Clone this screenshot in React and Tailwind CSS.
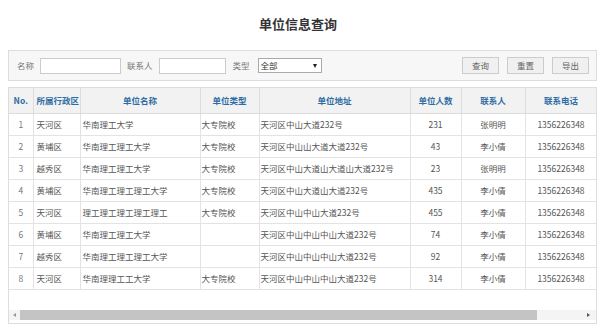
const COLS = [24, 47, 120, 59, 151, 51, 64, 72, 60]

const HEADERS = ['No.', '所属行政区', '单位名称', '单位类型', '单位地址', '单位人数', '联系人', '联系电话', '']

const ROWS = [
  ['1', '天河区', '华南理工大学', '大专院校', '天河区中山大道232号', '231', '张明明', '1356226348'],
  ['2', '黄埔区', '华南理工理工大学', '大专院校', '天河区中山山大道大道232号', '43', '李小倩', '1356226348'],
  ['3', '越秀区', '华南理工理工大学', '大专院校', '天河区中山大道山大道山大道232号', '23', '张明明', '1356226348'],
  ['4', '黄埔区', '华南理工理工理工大学', '大专院校', '天河区中山大道山大道232号', '435', '李小倩', '1356226348'],
  ['5', '天河区', '理工理工理工理工理工', '大专院校', '天河区中山中山大道232号', '455', '李小倩', '1356226348'],
  ['6', '黄埔区', '华南理工理工大学', '', '天河区中山中山中山大道232号', '74', '李小倩', '1356226348'],
  ['7', '越秀区', '华南理工理工理工大学', '', '天河区中山中山中山大道232号', '92', '李小倩', '1356226348'],
  ['8', '天河区', '华南理理工工大学', '大专院校', '天河区中山中山中山大道232号', '314', '李小倩', '1356226348'],
]

// column alignment for body cells
const ALIGN = ['text-center', 'text-left pl-[3px]', 'text-left pl-[2px]', 'text-left pl-[1px]', 'text-left pl-[1px]', 'text-center', 'text-center', 'text-center', 'text-center']

function Button({ children }) {
  return (
    <div className="w-[37px] h-[17px] flex items-center justify-center border border-[#ccc] bg-[#f0f0f0] text-[#666]">
      {children}
    </div>
  )
}

export default function App() {
  return (
    <div className="w-[604px] h-[332px] bg-white font-['Noto_Sans_CJK_SC',sans-serif] text-[8.5px] text-[#555] overflow-hidden">
      <div className="h-[50px] pt-[14px] pr-[8px]">
        <h1 className="text-center text-[13px] leading-[20px] font-bold text-[#333]">单位信息查询</h1>
      </div>

      <div className="ml-[8px] w-[589px] h-[31px] border border-[#ddd] bg-[#f7f7f7] flex items-center pl-[8px] pr-[7px]">
        <span className="text-[#777]">名称</span>
        <div className="ml-[6px] w-[81px] h-[16px] border border-[#ccc] bg-white" />
        <span className="ml-[6px] text-[#777]">联系人</span>
        <div className="ml-[6px] w-[67px] h-[16px] border border-[#ccc] bg-white" />
        <span className="ml-[7px] text-[#777]">类型</span>
        <div className="ml-[8px] w-[64px] h-[15px] border border-[#aaa] bg-white flex items-center justify-between pl-[2px] pr-[4px] text-[#333]">
          <span>全部</span>
          <span className="w-0 h-0 border-l-[2px] border-r-[2px] border-t-[4px] border-l-transparent border-r-transparent border-t-[#222]" />
        </div>
        <div className="ml-auto flex gap-[8px]">
          <Button>查询</Button>
          <Button>重置</Button>
          <Button>导出</Button>
        </div>
      </div>

      <div className="ml-[8px] mt-[6px] w-[589px] h-[237px] border border-[#ddd] flex flex-col">
        <div className="h-[222px] overflow-hidden">
          <table className="table-fixed border-collapse w-[648px]">
            <colgroup>
              {COLS.map((w, i) => (
                <col key={i} style={{ width: w }} />
              ))}
            </colgroup>
            <thead>
              <tr className="h-[25px] bg-[#f2f2f2]">
                {HEADERS.map((h, i) => (
                  <th
                    key={i}
                    className={`border-r border-b border-[#dcdcdc] font-bold text-[#2e6da4] leading-none ${i === 1 ? 'text-left pl-[3px]' : 'text-center'}`}
                  >
                    {h}
                  </th>
                ))}
              </tr>
            </thead>
            <tbody>
              {ROWS.map((r) => (
                <tr key={r[0]} className="h-[22px]">
                  {[...r, ''].map((c, i) => (
                    <td
                      key={i}
                      className={`border-r border-b border-[#e3e3e3] leading-none whitespace-nowrap overflow-hidden ${ALIGN[i]} ${i === 0 ? 'text-[#777]' : ''}`}
                    >
                      {c}
                    </td>
                  ))}
                </tr>
              ))}
            </tbody>
          </table>
        </div>

        <div className="h-[10px] flex items-center bg-[#f4f4f4]">
          <div className="w-[11px] flex justify-center">
            <span className="w-0 h-0 border-t-[2px] border-b-[2px] border-r-[3px] border-t-transparent border-b-transparent border-r-[#999]" />
          </div>
          <div className="w-[517px] h-[10px] bg-[#c4c4c4]" />
          <div className="flex-1 flex justify-end pr-[6px]">
            <span className="w-0 h-0 border-t-[2px] border-b-[2px] border-l-[3px] border-t-transparent border-b-transparent border-l-[#555]" />
          </div>
        </div>
      </div>
    </div>
  )
}
